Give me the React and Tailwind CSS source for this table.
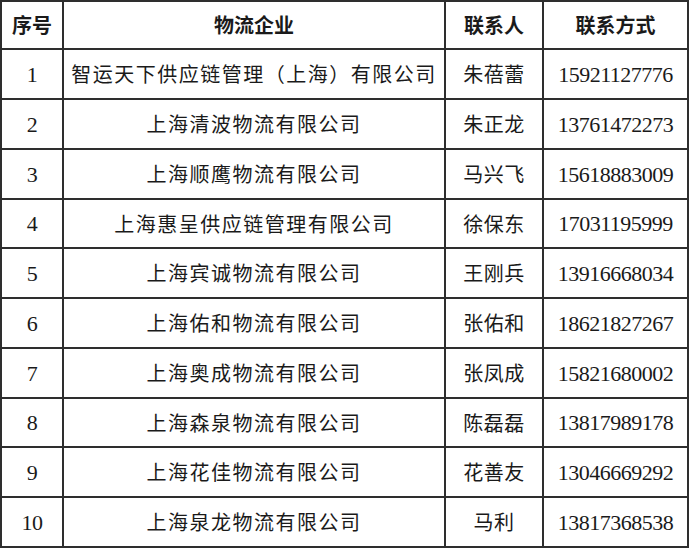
import React from "react";

const rows = [
  ["1", "智运天下供应链管理（上海）有限公司", "朱蓓蕾", "15921127776"],
  ["2", "上海清波物流有限公司", "朱正龙", "13761472273"],
  ["3", "上海顺鹰物流有限公司", "马兴飞", "15618883009"],
  ["4", "上海惠呈供应链管理有限公司", "徐保东", "17031195999"],
  ["5", "上海宾诚物流有限公司", "王刚兵", "13916668034"],
  ["6", "上海佑和物流有限公司", "张佑和", "18621827267"],
  ["7", "上海奥成物流有限公司", "张凤成", "15821680002"],
  ["8", "上海森泉物流有限公司", "陈磊磊", "13817989178"],
  ["9", "上海花佳物流有限公司", "花善友", "13046669292"],
  ["10", "上海泉龙物流有限公司", "马利", "13817368538"],
];

const cell = "flex items-center justify-center border-r-2 border-b-2 border-[#2e2e2e]";
const cjk = "font-['Noto_Sans_CJK_SC',sans-serif] text-[20px] text-[#1a1a1a]";
const num = "font-['Liberation_Serif','Noto_Sans_CJK_SC',serif] text-[22px] tracking-[-0.5px] text-[#1a1a1a]";

export default function App() {
  return (
    <div className="bg-white w-[690px] h-[549px] overflow-hidden">
      <div className="grid grid-cols-[62px_382px_98px_145px] w-[689px] border-l-2 border-t-2 border-[#2e2e2e]">
        <div className={`${cell} h-[48px] ${cjk} font-bold`}>序号</div>
        <div className={`${cell} h-[48px] ${cjk} font-bold`}>物流企业</div>
        <div className={`${cell} h-[48px] ${cjk} font-bold`}>联系人</div>
        <div className={`${cell} h-[48px] ${cjk} font-bold`}>联系方式</div>
        {rows.map((r, i) => {
          const h = i === 3 || i === 7 ? "h-[49px]" : "h-[50px]";
          return (
            <React.Fragment key={r[0]}>
              <div className={`${cell} ${h} ${num}`}>{r[0]}</div>
              <div className={`${cell} ${h} ${cjk} tracking-[1.5px] whitespace-nowrap`}>{r[1]}</div>
              <div className={`${cell} ${h} ${cjk} tracking-[0.5px]`}>{r[2]}</div>
              <div className={`${cell} ${h} ${num}`}>{r[3]}</div>
            </React.Fragment>
          );
        })}
      </div>
    </div>
  );
}
